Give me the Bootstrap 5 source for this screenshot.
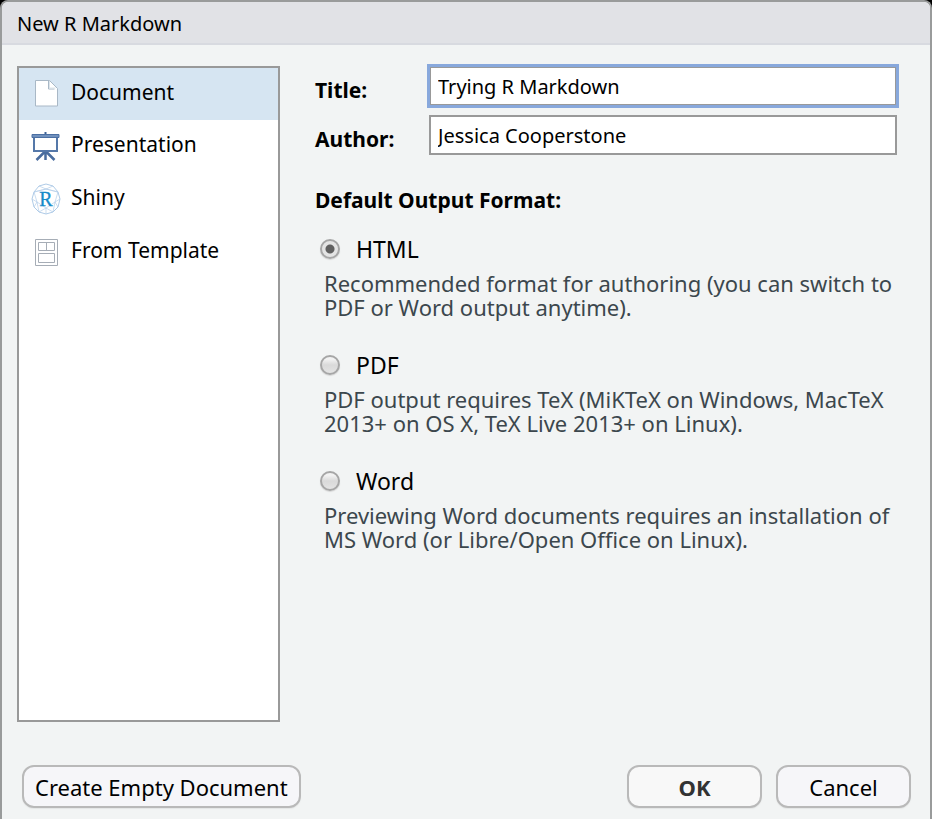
<!DOCTYPE html>
<html lang="en">
<head>
<meta charset="utf-8">
<meta name="viewport" content="width=device-width, initial-scale=1">
<title>New R Markdown</title>
<link href="https://cdn.jsdelivr.net/npm/bootstrap@5.3.0/dist/css/bootstrap.min.css" rel="stylesheet">
<style>
  body { background: #000; color: #000; font-family: "Lucida Grande", "Noto Sans", "Open Sans", sans-serif; font-size: 21px; line-height: 24px; }
  .dialog { background: #f2f4f4; border: 2px solid #999b9b; border-bottom: 0; border-radius: 8px 8px 0 0; overflow: hidden; }
  .dialog-title { background: #e1e2e6; border-bottom: 2px solid #d8dae0; font-size: 20px; padding: 10px 15px 7px; line-height: 24px; margin: 0; font-weight: 400; }
  .dialog-body { padding: 21px 33px 0 15px; gap: 35px; }
  .kind-list { width: 263px; background: #fff; border: 2px solid #999; }
  .kind { display: flex; align-items: center; width: 100%; height: 53px; padding: 0 12px; gap: 10px; border: 0; background: #fff; color: #000; text-align: left; }
  .kind:first-child { height: 52px; }
  .kind.active { background: #d6e5f2; }
  .kind span { padding-bottom: 5px; }
  .kind svg { flex: none; }
  .field { gap: 9px; }
  .field label, .format-heading { font-weight: 700; font-size: 21px; line-height: 24px; margin: 0; }
  .field label { flex: none; width: 105px; padding-top: 12px; }
  .field + .field { padding-top: 9px; }
  .field .form-control { height: 40px; border: 2px solid #999; border-radius: 0; padding: 0 7px; font-size: 20px; color: #000; background: #fff; box-shadow: none; }
  .field .form-control.focused { outline: 3px solid #88a8dc; outline-offset: -1px; }
  .format-heading { padding-top: 33px; }
  .format { padding: 23px 0 0 5px; }
  .format + .format { padding-top: 32px; }
  .format .form-check-input { width: 20px; height: 20px; margin: 0; border: 2px solid #a6a6a6; background: linear-gradient(#f2f2f2 15%, #d9d9d9 50%, #e4e4e4); box-shadow: 0 1px 1px #d5d5d5; }
  .format .form-check-input:checked { background: radial-gradient(circle, #606060 4px, #e4e4e4 5px); }
  .format label { font-size: 23px; line-height: 28px; }
  .format p { color: #3c474d; margin: 8px 0 0 4px; font-size: 22px; line-height: 24px; }
  .dialog-footer { padding: 43px 19px 11px 20px; gap: 14px; }
  .dialog-btn { height: 43px; min-width: 135px; padding: 0 11px; font-size: 22px; line-height: 24px; color: #000; background: #f6f6f9; border: 2px solid #b9b9b9; border-radius: 12px; box-shadow: 0 1px 1px #e4e6e6; }
  .dialog-btn.primary { background: #f8f8f8; color: #333; font-weight: 700; }
</style>
<script src="https://cdn.jsdelivr.net/npm/bootstrap@5.3.0/dist/js/bootstrap.bundle.min.js"></script>
</head>
<body>
<main class="dialog d-flex flex-column min-vh-100">
  <h1 class="dialog-title">New R Markdown</h1>
  <form class="d-flex flex-column flex-grow-1">
    <div class="dialog-body d-flex flex-grow-1">
      <nav class="kind-list flex-shrink-0" aria-label="Document kind">
        <button type="button" class="kind active" aria-current="true">
          <svg width="30" height="30" viewBox="0 0 30 30"><path d="M4.500 1.500h14l8 8v17.500h-22z" fill="#fff" stroke="#a9b8c6"/><path d="M17.500 2v8h6" fill="none" stroke="#a9b8c6"/><path d="M18.500 2v7h6" fill="none" stroke="#dce4ea"/></svg>
          <span>Document</span>
        </button>
        <button type="button" class="kind">
          <svg width="30" height="30" viewBox="0 0 30 30"><path d="M14.500 19L5.500 28M14.500 19l9 9M14.500 19v9" fill="none" stroke="#4a6d9f" stroke-width="2.500"/><path d="M3 5v14h23V5" fill="#fff" stroke="#5578a9" stroke-width="2"/><path d="M1 2.500h27v3H1z" fill="#7191bd" stroke="#4b6fa3"/><path d="M13.500 0h2v2h-2z" fill="#3e6397"/></svg>
          <span>Presentation</span>
        </button>
        <button type="button" class="kind">
          <svg width="30" height="34" viewBox="0 0 30 34"><g fill="none" stroke="#b4cfe9" stroke-width=".7"><path d="M15 1l7 2 5 6 2 7-2 8-5 5-7 2-7-2-5-5-2-8 2-7 5-6z" stroke="#8db5dc"/><path d="M8 3l7 3 7-3M15 6L3 9l3 10-5-3M15 6l12 3-3 10 5-3M6 19l2 10 7-4 7 4 2-10M6 19l9 6 9-6M3 9l12-3 12 3M3 24l3-5M27 24l-3-5M15 25v6"/></g><text x="15" y="23" text-anchor="middle" font-family="Liberation Serif, serif" font-size="20" fill="#168bca" stroke="#168bca" stroke-width=".3">R</text></svg>
          <span>Shiny</span>
        </button>
        <button type="button" class="kind">
          <svg width="30" height="30" viewBox="0 0 30 30"><g fill="#fff" stroke="#a6adb6"><path d="M4.500 1.500h22v26h-22z"/><path d="M7.500 4.500h16v8h-16zM15.500 4.500v8M7.500 15.500h16v9h-16z"/></g></svg>
          <span>From Template</span>
        </button>
      </nav>
      <div class="flex-grow-1">
        <div class="field d-flex">
          <label for="title">Title:</label>
          <input id="title" class="form-control focused" type="text" value="Trying R Markdown">
        </div>
        <div class="field d-flex">
          <label for="author">Author:</label>
          <input id="author" class="form-control" type="text" value="Jessica Cooperstone">
        </div>
        <h2 class="format-heading">Default Output Format:</h2>
        <div class="format">
          <div class="d-flex align-items-center gap-3">
            <input class="form-check-input" type="radio" name="format" id="html" checked>
            <label for="html">HTML</label>
          </div>
          <p>Recommended format for authoring (you can switch to PDF or Word output anytime).</p>
        </div>
        <div class="format">
          <div class="d-flex align-items-center gap-3">
            <input class="form-check-input" type="radio" name="format" id="pdf">
            <label for="pdf">PDF</label>
          </div>
          <p>PDF output requires TeX (MiKTeX on Windows, MacTeX 2013+ on OS X, TeX Live 2013+ on Linux).</p>
        </div>
        <div class="format">
          <div class="d-flex align-items-center gap-3">
            <input class="form-check-input" type="radio" name="format" id="word">
            <label for="word">Word</label>
          </div>
          <p>Previewing Word documents requires an installation of MS Word (or Libre/Open Office on Linux).</p>
        </div>
      </div>
    </div>
    <div class="dialog-footer d-flex">
      <button type="button" class="dialog-btn me-auto">Create Empty Document</button>
      <button type="submit" class="dialog-btn primary">OK</button>
      <button type="button" class="dialog-btn">Cancel</button>
    </div>
  </form>
</main>
</body>
</html>
